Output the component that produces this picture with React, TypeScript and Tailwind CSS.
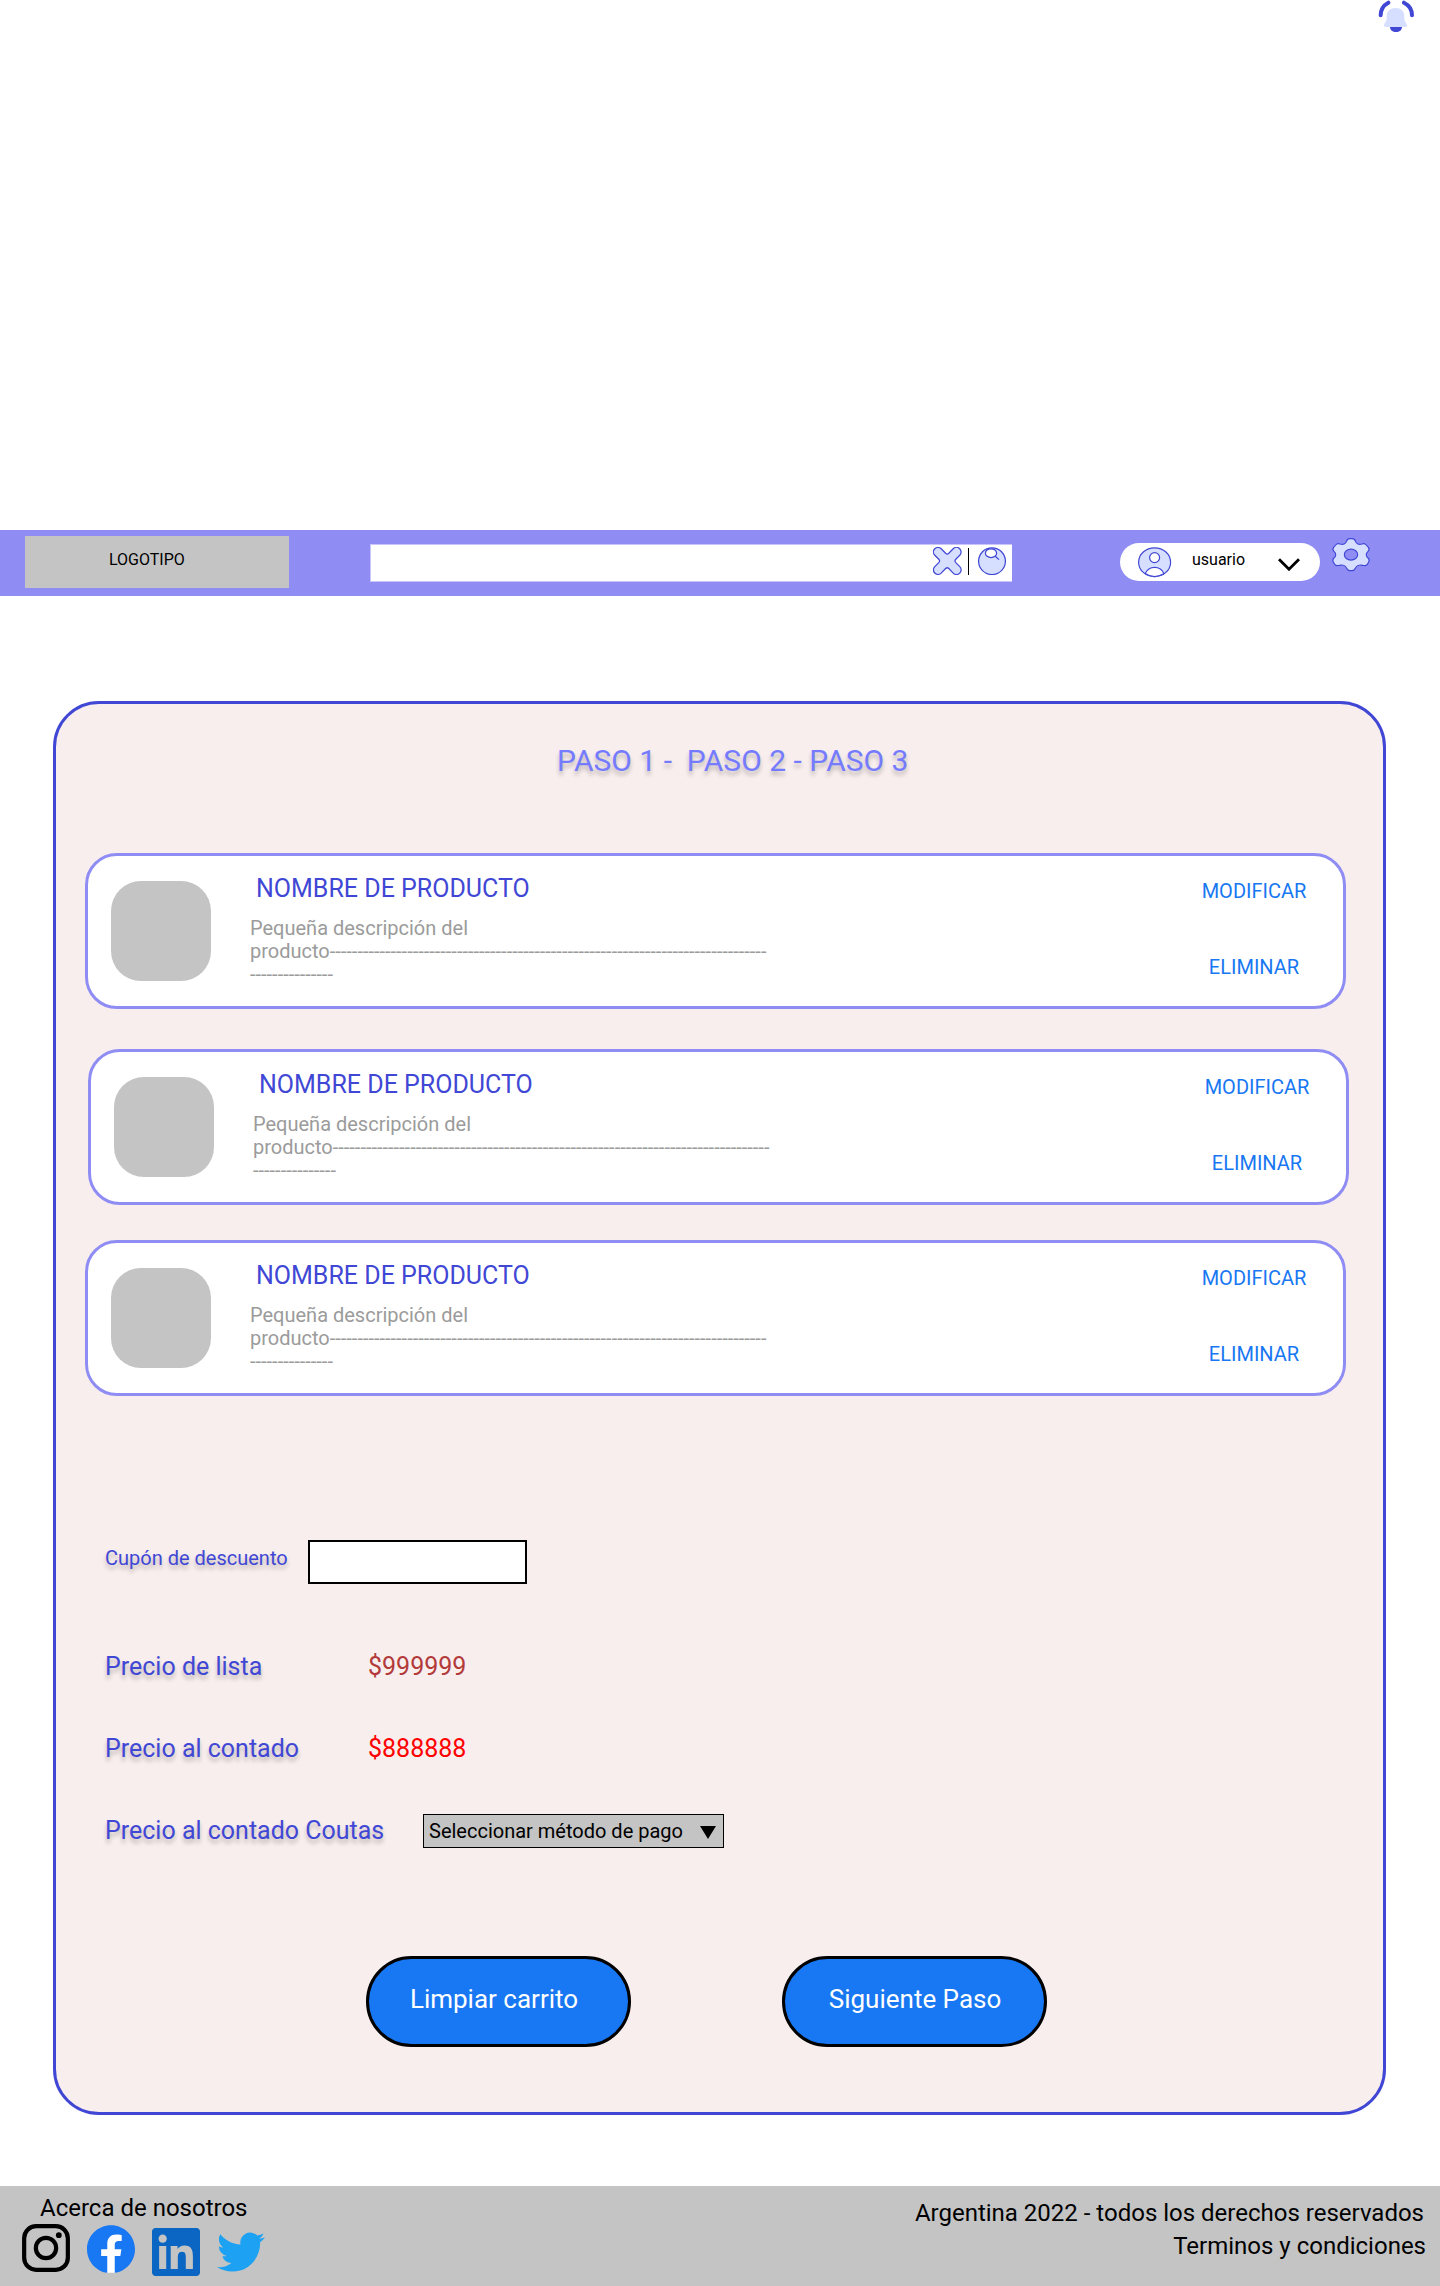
import type { ReactNode } from "react";

const INK = "#4147d5";
const TINT = "#d6dfff";

function BellIcon() {
  return (
    <svg className="block h-[34px] w-[40px]" viewBox="108 0 120 102" fill="none">
      <path d="M122 46C122 31 130 16 145 8" stroke={INK} strokeWidth="12" strokeLinecap="round" />
      <path d="M216 46C216 31 208 16 192 8" stroke={INK} strokeWidth="12" strokeLinecap="round" />
      <path
        d="M150 81C150 90 158 96 168 96C178 96 186 90 186 81Z"
        fill={INK}
      />
      <path
        d="M140 48C140 33 151 24 167 24C183 24 193 33 193 48V58C193 65 201 69 201 76C201 79 199 81 195 81H138C134 81 132 79 132 76C132 69 140 65 140 58Z"
        fill={TINT}
      />
    </svg>
  );
}

function ClearIcon() {
  return (
    <svg className="block h-7 w-[29px]" viewBox="0 0 29 28" fill={TINT} stroke={INK} strokeWidth="1.25">
      <path d="M8.2 1.8L12.6 6.3Q14.2 7.8 15.8 6.3L20.2 1.8A4.5 4.5 0 0 1 26.8 8.2L22.8 12.2Q21.2 13.8 22.8 15.6L26.8 19.6A4.5 4.5 0 0 1 20.2 26.1L15.8 21.5Q14.2 20 12.6 21.5L8.2 26.1A4.5 4.5 0 0 1 1.8 19.6L5.8 15.6Q7.4 13.8 5.8 12.2L1.8 8.2A4.5 4.5 0 0 1 8.2 1.8Z" />
    </svg>
  );
}

function SearchIcon() {
  return (
    <svg className="block h-7 w-7" viewBox="0 0 28 28" fill="none" stroke={INK} strokeWidth="1.25">
      <circle cx="14" cy="14.2" r="13.4" fill={TINT} />
      <ellipse cx="13" cy="6.2" rx="5.6" ry="4.4" fill="#fff" />
      <path d="M17.2 9.2L21 12.6" />
    </svg>
  );
}

function AvatarIcon() {
  return (
    <svg className="block h-[31px] w-[34px]" viewBox="0 0 34 31" fill="none" stroke={INK} strokeWidth="1.2">
      <ellipse cx="16.6" cy="15.2" rx="16" ry="14.4" fill={TINT} />
      <path d="M7.2 26.6C9 22.6 12.6 20.4 16.6 20.4S24.2 22.6 26 26.6C23 28.6 20 29.6 16.6 29.6S10.2 28.6 7.2 26.6Z" fill="#fff" />
      <circle cx="16.6" cy="10.6" r="5" fill="#fff" />
    </svg>
  );
}

function GearIcon() {
  return (
    <svg className="block h-9 w-[42px]" viewBox="690 48 126 108" stroke={INK} strokeWidth="3.4">
      <path
        fill={TINT}
        d="M740 63Q742 56 750 56H756Q764 56 766 63C768 72 777 75 786 72Q794 69 799 75L805 82Q810 89 804 94C797 100 797 108 804 114Q810 119 806 126L802 133Q797 139 788 136C778 133 769 137 766 145Q763 152 756 152H750Q743 152 740 145C737 137 728 133 718 136Q709 139 704 133L700 126Q696 119 702 114C709 108 709 100 702 94Q696 89 701 82L707 75Q712 69 720 72C729 75 738 72 740 63Z"
      />
      <ellipse cx="753" cy="104" rx="20" ry="16.5" fill="#8f8cf4" />
    </svg>
  );
}

function InstagramIcon() {
  return (
    <svg className="block size-12" viewBox="0 0 24 24" fill="none" stroke="#000" strokeWidth="2.1">
      <rect x="1.08" y="1.08" width="21.84" height="21.84" rx="6" />
      <circle cx="12" cy="12" r="5.08" />
      <circle cx="18.41" cy="5.59" r="1.44" fill="#000" stroke="none" />
    </svg>
  );
}

function FacebookIcon() {
  return (
    <svg className="block size-12" viewBox="0 0 24 24">
      <path d="M6 4H18V19L14 23.9H10L6 19Z" fill="#fff" />
      <path
        fill="#1877f2"
        d="M24 12.073c0-6.627-5.373-12-12-12s-12 5.373-12 12c0 5.99 4.388 10.954 10.125 11.854v-8.385H7.078v-3.47h3.047V9.43c0-3.007 1.792-4.669 4.533-4.669 1.312 0 2.686.235 2.686.235v2.953H15.83c-1.491 0-1.956.925-1.956 1.874v2.25h3.328l-.532 3.47h-2.796v8.385C19.612 23.027 24 18.062 24 12.073z"
      />
    </svg>
  );
}

function LinkedinIcon() {
  return (
    <svg className="block size-12" viewBox="0 0 24 24" fill="#0a66c2">
      <path d="M20.447 20.452h-3.554v-5.569c0-1.328-.027-3.037-1.852-3.037-1.853 0-2.136 1.445-2.136 2.939v5.667H9.351V9h3.414v1.561h.046c.477-.9 1.637-1.85 3.37-1.85 3.601 0 4.267 2.37 4.267 5.455v6.286zM5.337 7.433c-1.144 0-2.063-.926-2.063-2.065 0-1.138.92-2.063 2.063-2.063 1.14 0 2.064.925 2.064 2.063 0 1.139-.925 2.065-2.064 2.065zm1.782 13.019H3.555V9h3.564v11.452zM22.225 0H1.771C.792 0 0 .774 0 1.729v20.542C0 23.227.792 24 1.771 24h20.451C23.2 24 24 23.227 24 22.271V1.729C24 .774 23.2 0 22.222 0h.003z" />
    </svg>
  );
}

function TwitterIcon() {
  return (
    <svg className="block size-12" viewBox="0 0 24 24" fill="#1da1f2">
      <path d="M23.953 4.57a10 10 0 01-2.825.775 4.958 4.958 0 002.163-2.723c-.951.555-2.005.959-3.127 1.184a4.92 4.92 0 00-8.384 4.482C7.69 8.095 4.067 6.13 1.64 3.162a4.822 4.822 0 00-.666 2.475c0 1.71.87 3.213 2.188 4.096a4.904 4.904 0 01-2.228-.616v.06a4.923 4.923 0 003.946 4.827 4.996 4.996 0 01-2.212.085 4.936 4.936 0 004.604 3.417 9.867 9.867 0 01-6.102 2.105c-.39 0-.779-.023-1.17-.067a13.995 13.995 0 007.557 2.209c9.053 0 13.998-7.496 13.998-13.985 0-.21 0-.42-.015-.63A9.935 9.935 0 0024 4.59z" />
    </svg>
  );
}

function Header() {
  return (
    <header className="flex h-[66px] items-start bg-[#8f8cf4]">
      <div className="mt-1.5 ml-[25px] h-[52px] w-[264px] bg-[#c4c4c4] pt-3.5 pl-[84px] text-base leading-5">
        LOGOTIPO
      </div>
      <div className="mt-3.5 ml-[81px] flex h-[38px] w-[642px] items-start border border-r-0 border-[#c7c5f9] bg-white pt-0.5 pl-[561.5px]">
        <ClearIcon />
        <div className="mt-px ml-[6.5px] h-[27px] w-px bg-black" />
        <div className="ml-[9px]">
          <SearchIcon />
        </div>
      </div>
      <div className="mt-[13px] ml-[108px] flex h-[38px] w-[200px] items-start rounded-full bg-white pt-1 pl-[18px]">
        <AvatarIcon />
        <span className="mt-[3px] ml-5 w-[85.5px] text-base leading-5">usuario</span>
        <svg className="mt-[10.5px] block h-[13px] w-[22px]" viewBox="0 0 22 13" fill="none" stroke="#000" strokeWidth="2.8">
          <path d="M1 1.2L11 11.2L21 1.2" />
        </svg>
      </div>
      <div className="mt-1.5 ml-2.5">
        <GearIcon />
      </div>
    </header>
  );
}

function ProductCard({ shifted = false }: { shifted?: boolean }) {
  return (
    <article
      className={`flex h-[156px] w-[1261px] items-start rounded-[32px] border-3 border-[#8f8cf4] bg-white ${
        shifted ? "ml-8" : "ml-[29px]"
      }`}
    >
      <div className="mt-[25px] ml-[23px] size-[100px] shrink-0 rounded-[30px] bg-[#c4c4c4]" />
      <div className="ml-[39px] flex-1 pt-[18px]">
        <h2 className="pl-[6px] text-[25px] leading-[30px] text-[#4147d5]">NOMBRE DE PRODUCTO</h2>
        <p className="mt-[12.5px] text-xl leading-[23.4px] whitespace-nowrap text-[#9b9b9b]">
          Pequeña descripción del
          <br />
          producto{"-".repeat(79)}
          <br />
          {"-".repeat(15)}
        </p>
      </div>
      <div className="mr-[35px] flex w-[108px] flex-col items-center gap-[52px] pt-[23px] text-xl leading-6 text-[#1877f2]">
        <button>MODIFICAR</button>
        <button>ELIMINAR</button>
      </div>
    </article>
  );
}

function ShadowLabel({ children }: { children: ReactNode }) {
  return (
    <span className="block whitespace-nowrap text-[#4147d5] [text-shadow:0_4px_4px_rgba(0,0,0,0.25)]">{children}</span>
  );
}

export default function App() {
  return (
    <div className="flex h-[2286px] w-[1440px] flex-col overflow-hidden bg-white font-['Roboto',sans-serif] text-black">
      <div className="flex h-[530px] shrink-0 justify-end pr-6">
        <BellIcon />
      </div>
      <Header />

      <main className="mt-[105px] ml-[53px] flex h-[1414px] w-[1333px] shrink-0 flex-col rounded-[46px] border-3 border-[#4147d5] bg-[#f8eeed]">
        <h1 className="mt-[39px] pl-[501px] text-[30px] leading-9 whitespace-pre text-[#757bff] [text-shadow:0_4px_4px_rgba(0,0,0,0.25)]">
          {"PASO 1 -  PASO 2 - PASO 3"}
        </h1>
        <section className="mt-[74px] flex flex-col">
          <ProductCard />
          <div className="mt-10">
            <ProductCard shifted />
          </div>
          <div className="mt-[35px]">
            <ProductCard />
          </div>
        </section>

        <section className="mt-36 flex flex-col pl-[49px] text-[25px] leading-[30px]">
          <div className="flex items-start">
            <div className="w-[203px] pt-1.5 text-xl leading-6">
              <ShadowLabel>Cupón de descuento</ShadowLabel>
            </div>
            <div className="h-11 w-[219px] border-2 border-black bg-white" />
          </div>
          <div className="mt-[68px] flex">
            <div className="w-[263px]">
              <ShadowLabel>Precio de lista</ShadowLabel>
            </div>
            <span className="text-[#b33a3a]">$999999</span>
          </div>
          <div className="mt-[52px] flex">
            <div className="w-[263px]">
              <ShadowLabel>Precio al contado</ShadowLabel>
            </div>
            <span className="text-[#ff0000]">$888888</span>
          </div>
          <div className="mt-[50px] flex items-start">
            <div className="w-[318px] pt-0.5">
              <ShadowLabel>Precio al contado Coutas</ShadowLabel>
            </div>
            <div className="flex h-[34px] w-[301px] items-start justify-between border border-black bg-[#c4c4c4] pt-1 pr-[7px] pl-[5px] text-xl leading-6">
              <span>Seleccionar método de pago</span>
              <svg className="mt-[7px] block h-[13px] w-4" viewBox="0 0 16 13">
                <path d="M0 0H16L8 13Z" />
              </svg>
            </div>
          </div>
        </section>

        <div className="mt-[108px] flex gap-[151px] pl-[310px] text-[26px] leading-[30px] text-white">
          <button className="h-[91px] w-[265px] rounded-[46px] border-3 border-black bg-[#1877f2] pr-[9px] pb-1.5">
            Limpiar carrito
          </button>
          <button className="h-[91px] w-[265px] rounded-[46px] border-3 border-black bg-[#1877f2] pb-1.5 pl-px">
            Siguiente Paso
          </button>
        </div>
      </main>

      <footer className="mt-[71px] flex h-[100px] shrink-0 items-start justify-between bg-[#c4c4c4] text-2xl leading-[30px]">
        <div className="pt-[7px] pl-[22px]">
          <p className="pl-[18px]">Acerca de nosotros</p>
          <div className="mt-px flex items-start gap-[17px]">
            <InstagramIcon />
            <div className="mt-px">
              <FacebookIcon />
            </div>
            <div className="mt-1">
              <LinkedinIcon />
            </div>
            <div className="mt-1">
              <TwitterIcon />
            </div>
          </div>
        </div>
        <div className="flex flex-col items-end pt-3 pr-[14px] text-right">
          <p className="pr-0.5">Argentina 2022 - todos los derechos reservados</p>
          <p className="mt-[3px]">Terminos y condiciones</p>
        </div>
      </footer>
    </div>
  );
}
